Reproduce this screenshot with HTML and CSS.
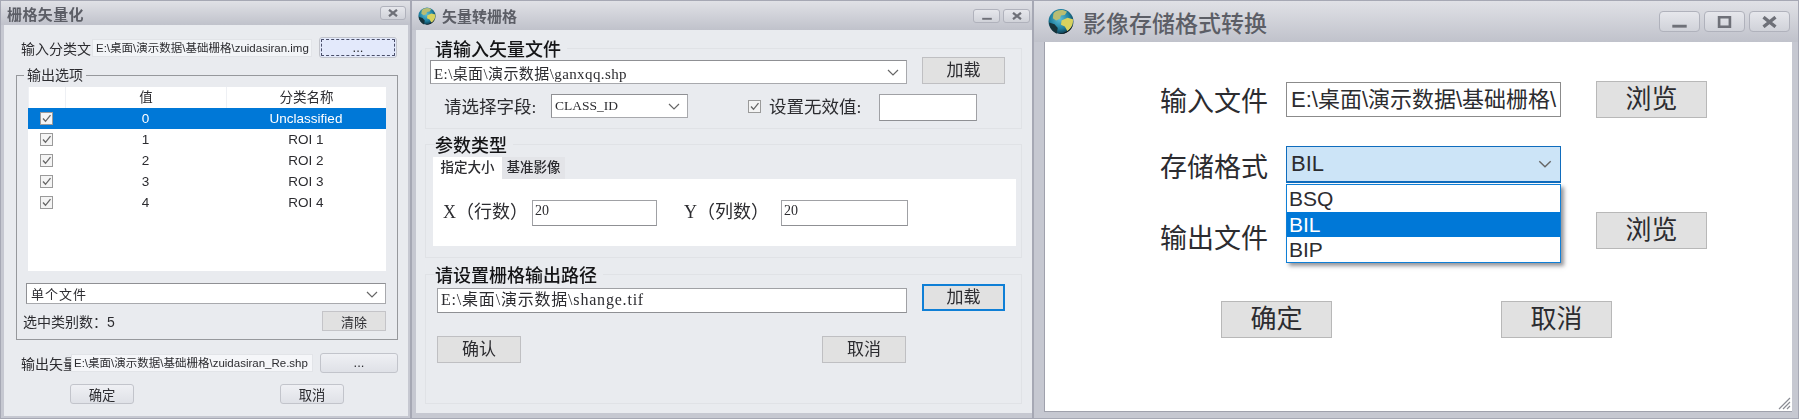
FILE: index.html
```html
<!DOCTYPE html>
<html>
<head>
    <title>Dialogs</title>
    <link rel="stylesheet" href="styles.css">
</head>
<body>
    <svg class="defs" width="0" height="0">
        <defs>
            <radialGradient id="ocean" cx="45%" cy="40%" r="65%">
                <stop offset="0" stop-color="#5fc0d8"/>
                <stop offset="0.6" stop-color="#1f7f9f"/>
                <stop offset="1" stop-color="#0b2a38"/>
            </radialGradient>
            <symbol id="globe" viewBox="0 0 24 24">
                <circle cx="12" cy="12" r="11.500" fill="url(#ocean)"/>
                <path d="M5 4.500C8 1 14 .5 17.500 3l-2 3-3.500.5-1 3-3.500 1.500L4.500 9z" fill="#b9bd72"/>
                <path d="M12.500 11l5.500-2.500 5 1.500c.5 4.500-1.500 8.500-5 11l-2.500-4.500-3.500-1.500z" fill="#d8d25e"/>
                <path d="M1 13l5 1.500 3 3.500-1 5.200C4 21.500 1.300 17.500 1 13z" fill="#16333a"/>
                <path d="M10 23.400a11.500 11.500 0 0 0 13-8.400c-2 4.500-7 8-13 8.400z" fill="#0e1519"/>
            </symbol>
            <symbol id="check" viewBox="0 0 13 13">
                <rect x="0.500" y="0.500" width="12" height="12" fill="#f4f4f4" stroke="#9a9a9a"/>
                <path d="M3 6.500l2.500 2.800L10.500 3.200" fill="none" stroke="#666" stroke-width="1.300"/>
            </symbol>
            <symbol id="chev" viewBox="0 0 12 7">
                <path d="M1 1l5 5 5-5" fill="none" stroke="#666" stroke-width="1.200"/>
            </symbol>
            <symbol id="x" viewBox="0 0 12 10">
                <path d="M1 1l10 8M11 1L1 9" fill="none" stroke="#6e7078" stroke-width="2.800"/>
            </symbol>
            <symbol id="dash" viewBox="0 0 12 10">
                <path d="M0 8.500h12" fill="none" stroke="#6e7078" stroke-width="2.400"/>
            </symbol>
            <symbol id="box" viewBox="0 0 12 10">
                <rect x="1.500" y="1" width="9" height="8" fill="none" stroke="#6e7078" stroke-width="2.200"/>
            </symbol>
        </defs>
    </svg>

    <div class="desk">
        <!-- 栅格矢量化 -->
        <div class="win win-a">
            <div class="titlebar">
                <span class="title">栅格矢量化</span>
                <div class="ctrls"><span class="ctrl"><svg><use href="#x"/></svg></span></div>
            </div>
            <div class="panel">
                <div class="a-row a-row-top">
                    <label class="a-label">输入分类文</label>
                    <div class="a-input">E:\桌面\演示数据\基础栅格\zuidasiran.img</div>
                    <button class="a-btn a-browse focus">...</button>
                </div>
                <div class="a-group">
                    <span class="legend a-legend">输出选项</span>
                    <div class="grid-table">
                        <div class="th"></div><div class="th">值</div><div class="th">分类名称</div>
                        <div class="td sel"><svg class="chk"><use href="#check"/></svg></div><div class="td sel">0</div><div class="td sel">Unclassified</div>
                        <div class="td"><svg class="chk"><use href="#check"/></svg></div><div class="td">1</div><div class="td">ROI 1</div>
                        <div class="td"><svg class="chk"><use href="#check"/></svg></div><div class="td">2</div><div class="td">ROI 2</div>
                        <div class="td"><svg class="chk"><use href="#check"/></svg></div><div class="td">3</div><div class="td">ROI 3</div>
                        <div class="td"><svg class="chk"><use href="#check"/></svg></div><div class="td">4</div><div class="td">ROI 4</div>
                    </div>
                    <div class="combo a-combo">单个文件<svg class="chev"><use href="#chev"/></svg></div>
                    <div class="a-status">
                        <span>选中类别数：5</span>
                        <button class="a-clear">清除</button>
                    </div>
                </div>
                <div class="a-row a-row-out">
                    <label class="a-label-out">输出矢量</label>
                    <div class="a-input a-input-out">E:\桌面\演示数据\基础栅格\zuidasiran_Re.shp</div>
                    <button class="a-btn a-browse">...</button>
                </div>
                <div class="a-actions">
                    <button class="a-btn a-ok">确定</button>
                    <button class="a-btn a-ok">取消</button>
                </div>
            </div>
        </div>

        <!-- 矢量转栅格 -->
        <div class="win win-b">
            <div class="titlebar">
                <svg class="globe"><use href="#globe"/></svg>
                <span class="title">矢量转栅格</span>
                <div class="ctrls">
                    <span class="ctrl"><svg><use href="#dash"/></svg></span>
                    <span class="ctrl"><svg><use href="#x"/></svg></span>
                </div>
            </div>
            <div class="panel">
                <div class="b-group b-group-1">
                    <span class="legend b-legend">请输入矢量文件</span>
                    <div class="b-row-file">
                        <div class="combo b-combo-file">E:\桌面\演示数据\ganxqq.shp<svg class="chev"><use href="#chev"/></svg></div>
                        <button class="b-btn">加载</button>
                    </div>
                    <div class="b-row-field">
                        <label class="b-label b-label-field">请选择字段:</label>
                        <div class="combo b-combo-field">CLASS_ID<svg class="chev"><use href="#chev"/></svg></div>
                        <svg class="chk b-chk"><use href="#check"/></svg>
                        <label class="b-label b-label-nodata">设置无效值:</label>
                        <div class="b-input b-input-nodata"></div>
                    </div>
                </div>
                <div class="b-group b-group-2">
                    <span class="legend b-legend">参数类型</span>
                    <div class="tabs">
                        <span class="tab active">指定大小</span>
                        <span class="tab">基准影像</span>
                    </div>
                    <div class="tab-body">
                        <label class="b-label b-label-x">X（行数）</label>
                        <div class="b-input b-input-x">20</div>
                        <label class="b-label b-label-y">Y（列数）</label>
                        <div class="b-input b-input-y">20</div>
                    </div>
                </div>
                <div class="b-group b-group-3">
                    <span class="legend b-legend">请设置栅格输出路径</span>
                    <div class="b-row-out">
                        <div class="b-input b-input-out">E:\桌面\演示数据\shange.tif</div>
                        <button class="b-btn b-btn-focus">加载</button>
                    </div>
                    <div class="b-actions">
                        <button class="b-btn">确认</button>
                        <button class="b-btn">取消</button>
                    </div>
                </div>
            </div>
        </div>

        <!-- 影像存储格式转换 -->
        <div class="win win-c">
            <div class="titlebar">
                <svg class="globe"><use href="#globe"/></svg>
                <span class="title">影像存储格式转换</span>
                <div class="ctrls">
                    <span class="ctrl"><svg><use href="#dash"/></svg></span>
                    <span class="ctrl"><svg><use href="#box"/></svg></span>
                    <span class="ctrl"><svg><use href="#x"/></svg></span>
                </div>
            </div>
            <div class="panel">
                <div class="c-form">
                    <label class="c-label c-label-1">输入文件</label>
                    <div class="c-input">E:\桌面\演示数据\基础栅格\</div>
                    <button class="c-btn">浏览</button>

                    <label class="c-label c-label-2">存储格式</label>
                    <div class="c-select">
                        <div class="c-combo">BIL<svg class="chev"><use href="#chev"/></svg></div>
                        <div class="c-menu">
                            <div class="c-opt">BSQ</div>
                            <div class="c-opt on">BIL</div>
                            <div class="c-opt">BIP</div>
                        </div>
                    </div>
                    <span></span>

                    <label class="c-label c-label-3">输出文件</label>
                    <div class="c-input"></div>
                    <button class="c-btn">浏览</button>
                </div>
                <div class="c-actions">
                    <button class="c-btn">确定</button>
                    <button class="c-btn">取消</button>
                </div>
                <svg class="grip" viewBox="0 0 14 14"><path d="M13 2L2 13M13 6l-7 7M13 10l-3 3" fill="none" stroke="#8a8c94" stroke-width="1.200"/></svg>
            </div>
        </div>
    </div>
</body>
</html>
```

FILE: styles.css
```css
* {
    box-sizing: border-box;
}
html, body {
    margin: 0;
    padding: 0;
    overflow: hidden;
}
body {
    font-family: "Liberation Sans", "Noto Sans CJK SC", sans-serif;
    color: #2c2c30;
    background: #b5b7c2;
}
button {
    font-family: inherit;
    color: inherit;
    padding: 0;
}
.defs {
    position: absolute;
}
.desk {
    display: flex;
    width: 1799px;
    height: 419px;
}

/* window frame */
.win {
    display: flex;
    flex-direction: column;
    height: 419px;
    background: #c6c8d1;
    border: 1px solid #a6a8b4;
}
.titlebar {
    display: flex;
    align-items: center;
    flex: none;
    background: linear-gradient(#e0e1e6, #c0c2cb);
}
.title {
    color: #5c5e66;
    font-weight: 700;
    white-space: nowrap;
}
.ctrls {
    display: flex;
    margin-left: auto;
}
.ctrl {
    display: flex;
    align-items: center;
    justify-content: center;
    border: 1px solid #b0b2bc;
    border-radius: 3px;
    background: linear-gradient(#e6e7ec, #d0d2d9);
}
.panel {
    position: relative;
    flex: 1;
}
.legend {
    position: absolute;
    white-space: nowrap;
    line-height: 20px;
}
.chk {
    display: block;
    width: 13px;
    height: 13px;
}
.combo {
    position: relative;
    display: flex;
    align-items: center;
    background: #fff;
    border: 1px solid #8f9094;
    border-right-color: #a8a9ad;
    border-bottom-color: #a8a9ad;
    white-space: nowrap;
}
.chev {
    position: absolute;
    right: 7px;
    top: 50%;
    width: 12px;
    height: 7px;
    margin-top: -3px;
}

/* window a */
.win-a {
    width: 411px;
    padding: 0 2px 2px 3px;
    filter: blur(0.4px);
}
.win-a .titlebar {
    height: 24px;
    margin: 0 -2px 0 -3px;
    padding: 0 4px 0 6px;
}
.win-a .title {
    font-size: 15px;
    letter-spacing: 0.400px;
}
.win-a .ctrl {
    width: 26px;
    height: 14px;
}
.win-a .ctrl svg {
    width: 10px;
    height: 8px;
}
.win-a .panel {
    background: #e9ebef;
    padding: 12px 0 0 12px;
    font-size: 14px;
}
.a-row {
    display: flex;
    align-items: center;
}
.a-row-top {
    height: 21px;
}
.a-label {
    width: 75px;
    margin-left: 5px;
    margin-right: -4px;
    white-space: nowrap;
}
.a-input {
    position: relative;
    width: 220px;
    height: 18px;
    margin-right: 7px;
    padding-left: 3px;
    background: #f2f4f7;
    border: 1px solid #e2e4e8;
    font-size: 11.500px;
    line-height: 16px;
    white-space: nowrap;
    overflow: hidden;
}
.a-btn {
    height: 20px;
    border: 1px solid #c2c4cb;
    border-radius: 3px;
    background: linear-gradient(#eff0f4, #dfe1e7);
}
.a-browse {
    width: 78px;
    font-size: 13px;
    line-height: 14px;
}
.a-browse.focus {
    height: 21px;
    background: #e3e9fb;
    outline: 1px dashed #4a4e6a;
    outline-offset: -3px;
}
.a-group {
    position: relative;
    width: 382px;
    height: 265px;
    margin-top: 17px;
    padding: 11px 0 0 9px;
    border: 1px solid #96989c;
}
.a-legend {
    left: 7px;
    top: -11px;
    padding: 0 3px;
    background: #e9ebef;
}
.grid-table {
    display: grid;
    grid-template-columns: 37px 161px 160px;
    grid-auto-rows: 21px;
    width: 358px;
    height: 184px;
    margin-left: 2px;
    background: #fff;
    text-align: center;
    font-size: 13.500px;
    line-height: 21px;
}
.th {
    border-left: 1px solid #eef0f4;
}
.td {
    display: flex;
    align-items: center;
    justify-content: center;
}
.td.sel {
    background: #0078d7;
    color: #fff;
}
.a-combo {
    width: 360px;
    height: 21px;
    margin-top: 12px;
    padding-left: 4px;
    font-size: 13px;
    letter-spacing: 1px;
}
.a-status {
    display: flex;
    align-items: center;
    justify-content: space-between;
    width: 363px;
    height: 20px;
    margin-top: 7px;
    margin-left: -3px;
}
.a-clear {
    width: 64px;
    height: 20px;
    border: 1px solid #c4c4c8;
    background: #e1e1e1;
    font-size: 13px;
}
.a-row-out {
    height: 20px;
    margin-top: 13px;
}
.a-label-out {
    width: 50px;
    margin-left: 5px;
    white-space: nowrap;
}
.a-input-out {
    width: 242px;
    margin-right: 7px;
    padding-left: 2px;
    background: #f5f6f9;
}
.a-actions {
    display: flex;
    gap: 146px;
    margin-top: 11px;
    margin-left: 54px;
}
.a-ok {
    width: 64px;
}

/* window b */
.win-b {
    width: 622px;
    padding: 0 0 5px 4px;
    filter: blur(0.4px);
}
.win-b .titlebar {
    height: 29px;
    margin: 0 0 0 -4px;
    padding: 0 2px 0 6px;
}
.win-b .globe {
    width: 18px;
    height: 18px;
    margin-right: 6px;
}
.win-b .title {
    font-size: 15px;
}
.win-b .ctrls {
    gap: 3px;
}
.win-b .ctrl {
    width: 27px;
    height: 14px;
}
.win-b .ctrl svg {
    width: 10px;
    height: 8px;
}
.win-b .panel {
    background: #e9ebef;
    padding: 18px 0 0 9px;
    font-family: "Liberation Serif", "Noto Sans CJK SC", serif;
}
.b-group {
    position: relative;
    width: 597px;
    border: 1px solid #e0e2e6;
}
.b-legend {
    left: 9px;
    top: -9px;
    padding-right: 6px;
    background: #e9ebef;
    color: #141416;
    font-size: 18px;
    font-weight: 500;
}
.b-group-1 {
    height: 81px;
    padding: 8px 0 0 4px;
}
.b-group-2 {
    height: 114px;
    margin-top: 15px;
    padding: 12px 0 0 7px;
}
.b-group-3 {
    height: 130px;
    margin-top: 16px;
    padding: 9px 0 0 11px;
}
.b-row-file, .b-row-out {
    display: flex;
    align-items: flex-end;
    gap: 15px;
}
.b-btn {
    width: 83px;
    height: 27px;
    border: 1px solid #bfbfc2;
    background: #e1e1e1;
    font-family: "Liberation Serif", "Noto Sans CJK SC", serif;
    font-size: 17px;
    line-height: 23px;
}
.b-btn-focus {
    border: 2px solid #0f7fd6;
}
.b-combo-file {
    width: 477px;
    height: 24px;
    padding-left: 3px;
    font-size: 15px;
    letter-spacing: 0.400px;
}
.b-row-field {
    display: flex;
    align-items: flex-start;
    margin-top: 10px;
}
.b-label {
    font-size: 17.500px;
    line-height: 27px;
    white-space: nowrap;
}
.b-label-field {
    width: 107px;
    margin-left: 14px;
}
.b-combo-field {
    width: 137px;
    height: 24px;
    padding-left: 3px;
    font-size: 13.500px;
}
.b-chk {
    margin: 6px 8px 0 60px;
}
.b-label-nodata {
    width: 110px;
}
.b-input {
    background: #fff;
    border: 1px solid #a0a1a5;
    border-bottom-color: #8f9094;
    white-space: nowrap;
}
.b-input-nodata {
    width: 98px;
    height: 27px;
}
.tabs {
    display: flex;
    height: 22px;
    font-size: 13.500px;
    font-weight: 500;
    line-height: 22px;
    text-align: center;
}
.tab {
    width: 63px;
    background: #e3e4e8;
}
.tab.active {
    width: 69px;
    background: #fff;
}
.tab-body {
    display: flex;
    align-items: center;
    width: 583px;
    height: 67px;
    padding: 0 0 0 10px;
    background: #fff;
}
.b-input-x, .b-input-y {
    height: 26px;
    padding-left: 2px;
    font-size: 14px;
    line-height: 20px;
}
.b-label-x {
    width: 89px;
    font-size: 18px;
}
.b-input-x {
    width: 125px;
    margin-right: 27px;
}
.b-label-y {
    width: 97px;
    font-size: 18px;
}
.b-input-y {
    width: 127px;
}
.b-input-out {
    width: 470px;
    height: 25px;
    margin-top: 3px;
    padding-left: 3px;
    font-size: 16px;
    letter-spacing: 0.800px;
    line-height: 21px;
    align-self: flex-end;
    margin-bottom: -2px;
}
.b-actions {
    display: flex;
    justify-content: space-between;
    width: 469px;
    margin-top: 25px;
}
.b-actions .b-btn {
    width: 84px;
}

/* window c */
.win-c {
    width: 766px;
    padding: 0 6px 6px 10px;
}
.win-c .titlebar {
    height: 41px;
    margin: 0 -6px 0 -10px;
    padding: 0 8px 0 14px;
}
.win-c .globe {
    width: 26px;
    height: 27px;
    margin-right: 9px;
}
.win-c .title {
    font-size: 23px;
    font-weight: 500;
}
.win-c .ctrls {
    gap: 4px;
}
.win-c .ctrl {
    width: 41px;
    height: 21px;
    border-radius: 4px;
}
.win-c .ctrl svg {
    width: 15px;
    height: 12px;
}
.win-c .panel {
    background: #fff;
    padding: 39px 0 0 115px;
    border: 1px solid #9fa1ac;
    border-width: 0 0 1px 1px;
}
.c-form {
    display: grid;
    grid-template-columns: 126px 275px 146px;
    grid-template-rows: 36px 37px 36px;
    row-gap: 29px;
    align-items: center;
}
.c-form .c-btn {
    margin-left: 35px;
}
.c-label {
    font-size: 27px;
    line-height: 36px;
    white-space: nowrap;
}
.c-label-1 {
    margin-top: 5px;
}
.c-label-2 {
    margin-top: 7px;
}
.c-label-3 {
    margin-top: 18px;
}
.c-input {
    height: 35px;
    padding-left: 4px;
    border: 1px solid #8b8b8b;
    font-size: 22px;
    line-height: 33px;
    white-space: nowrap;
    overflow: hidden;
}
.c-btn {
    width: 111px;
    height: 37px;
    border: 1px solid #b8b8b8;
    background: #e1e1e1;
    font-size: 26px;
    line-height: 33px;
}
.c-select {
    position: relative;
    height: 37px;
}
.c-combo {
    position: relative;
    height: 37px;
    padding-left: 4px;
    background: #cce4f7;
    border: 2px solid #0f6cbd;
    border-width: 1px 1px 2px;
    font-size: 22px;
    line-height: 34px;
}
.c-combo .chev {
    right: 8px;
    width: 14px;
    height: 8px;
    margin-top: -4px;
}
.c-menu {
    position: absolute;
    left: 0;
    top: 38px;
    width: 275px;
    height: 79px;
    padding-top: 1px;
    background: #fff;
    border: 1px solid #0f7fd6;
    box-shadow: 3px 3px 4px rgba(60, 60, 70, 0.55);
    font-size: 21px;
}
.c-opt {
    height: 25.500px;
    padding-left: 2px;
    line-height: 25px;
}
.c-opt.on {
    background: #0078d7;
    color: #fff;
}
.c-actions {
    display: flex;
    gap: 169px;
    margin-top: 53px;
    margin-left: 61px;
}
.grip {
    position: absolute;
    right: 1px;
    bottom: 1px;
    width: 14px;
    height: 14px;
}
```
